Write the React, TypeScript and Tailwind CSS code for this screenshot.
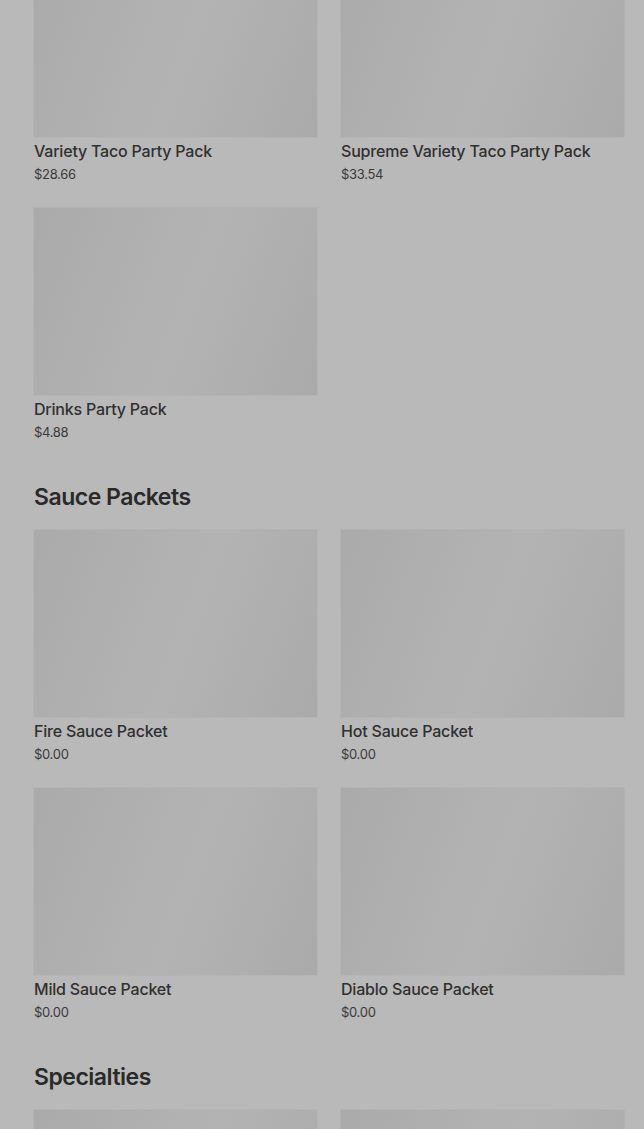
import React from "react";

type Item = { name: string; price: string };

const sections: { title?: string; items: Item[] }[] = [
  {
    items: [
      { name: "Variety Taco Party Pack", price: "$28.66" },
      { name: "Supreme Variety Taco Party Pack", price: "$33.54" },
      { name: "Drinks Party Pack", price: "$4.88" },
    ],
  },
  {
    title: "Sauce Packets",
    items: [
      { name: "Fire Sauce Packet", price: "$0.00" },
      { name: "Hot Sauce Packet", price: "$0.00" },
      { name: "Mild Sauce Packet", price: "$0.00" },
      { name: "Diablo Sauce Packet", price: "$0.00" },
    ],
  },
  {
    title: "Specialties",
    items: [
      { name: "", price: "" },
      { name: "", price: "" },
    ],
  },
];

function Card({ item }: { item: Item }) {
  return (
    <div className="flex flex-col">
      <div className="h-[187px] w-full bg-[linear-gradient(110deg,#aaaaaa_0%,#b2b2b2_45%,#b3b3b3_55%,#aaaaaa_100%)] shadow-[0_0_0_1px_#b4b4b4]" />
      <div className="mt-1 text-[16px] leading-[20px] font-medium text-[#303030] tracking-[-0.2px]">
        {item.name}
      </div>
      <div className="mt-1 text-[13px] leading-[18px] text-[#3a3a3a] tracking-[-0.3px]">{item.price}</div>
    </div>
  );
}

export default function App() {
  return (
    <div
      className="w-[644px] h-[1129px] overflow-hidden bg-[#b9b9b9]"
      style={{ fontFamily: "Inter, 'Noto Sans', sans-serif" }}
    >
      <div className="mt-[-50px] pl-[34px] pr-[20px]">
        {sections.map((s, i) => (
          <div key={i}>
            {s.title && (
              <h2 className="mt-[40px] mb-[17px] text-[23px] leading-[32px] font-semibold text-[#2a2a2a] tracking-[-0.5px]">
                {s.title}
              </h2>
            )}
            <div className="grid grid-cols-2 gap-x-[24px] gap-y-[25px]">
              {s.items.map((it, j) => (
                <Card key={j} item={it} />
              ))}
            </div>
          </div>
        ))}
      </div>
    </div>
  );
}
